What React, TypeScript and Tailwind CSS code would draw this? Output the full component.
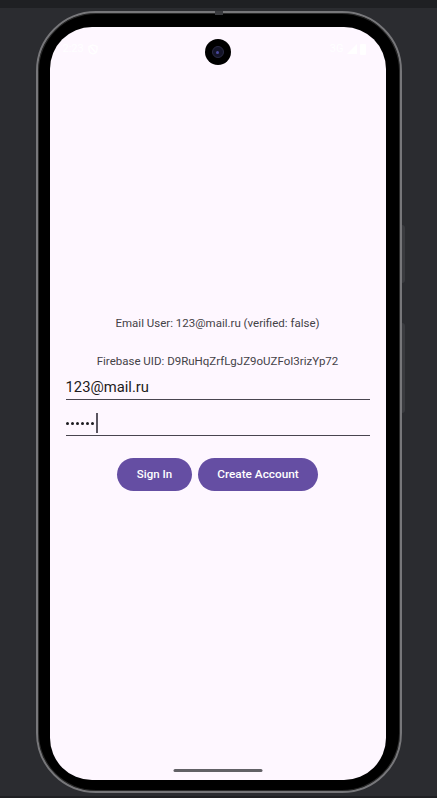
export default function App() {
  return (
    <div className="relative w-[437px] h-[798px] overflow-hidden bg-[#2b2c30] font-['Roboto',sans-serif]">
      {/* top and bottom strips */}
      <div className="h-[8px] bg-[#1f2023]" />

      {/* PHONE */}
      <div className="relative mx-auto mt-[3px] w-[366px] h-[782px] rounded-[60px] bg-black border-[2px] border-[#77777a] shadow-[inset_0_0_0_1px_#2a2a2a] pt-[14px] pl-[12px] pr-[14px] pb-[11px]">
        {/* side keys */}
        <div className="absolute right-[-5px] top-[212px] w-[3px] h-[58px] rounded-r bg-[#3a3b3f]" />
        <div className="absolute right-[-5px] top-[310px] w-[3px] h-[90px] rounded-r bg-[#3a3b3f]" />
        <div className="absolute left-1/2 top-[-2px] -translate-x-1/2 w-[8px] h-[4px] bg-[#3a3b3f]" />

        {/* SCREEN */}
        <div className="relative h-full rounded-[42px] bg-[#fef7ff] flex flex-col items-stretch justify-center px-4">
          {/* status bar */}
          <div className="absolute left-[13px] right-[20px] top-[14px] flex items-center justify-between text-[11px] text-white">
            <div className="flex items-center gap-1">
              <span>2:23</span>
              <svg width="10" height="11" viewBox="0 0 10 11" fill="none" stroke="white" strokeWidth="1.2">
                <path d="M5 1 L9 2.5 V5.5 C9 8 7 9.5 5 10 C3 9.5 1 8 1 5.5 V2.5 Z" />
                <path d="M2 2 L8 9" />
              </svg>
            </div>
            <div className="flex items-center gap-[3px]">
              <span>3G</span>
              <svg width="10" height="10" viewBox="0 0 10 10">
                <path d="M10 0 V10 H0 Z" fill="white" />
              </svg>
              <div className="w-[6px] h-[11px] rounded-[1px] bg-white" />
            </div>
          </div>

          {/* camera */}
          <div className="absolute left-1/2 top-[12px] -translate-x-1/2 w-[26px] h-[26px] rounded-full bg-black flex items-center justify-center">
            <div className="w-[12px] h-[12px] rounded-full bg-[#141428] border border-[#2a2a44] flex items-center justify-center">
              <div className="w-[3px] h-[3px] rounded-full bg-[#4a4aa0]" />
            </div>
          </div>

          {/* CONTENT */}
          <div className="flex flex-col mt-[-2px]">
            <p className="text-center text-[11.5px] leading-[16px] text-[#444247]">
              Email User: 123@mail.ru (verified: false)
            </p>
            <p className="mt-[22px] text-center text-[11.5px] leading-[16px] text-[#444247]">
              Firebase UID: D9RuHqZrfLgJZ9oUZFoI3rizYp72
            </p>

            <div className="mt-[7px] h-[24px] border-b border-[#49454f] flex items-center">
              <span className="text-[14.8px] text-[#1d1b20]">123@mail.ru</span>
            </div>
            <div className="mt-[12px] h-[24px] border-b border-[#49454f] flex items-center">
              <div className="flex gap-[2px]" aria-label="password">
                {[0, 1, 2, 3, 4, 5].map((i) => (
                  <span key={i} className="w-[3px] h-[3px] rounded-full bg-[#1d1b20]" />
                ))}
              </div>
              <span className="ml-[2px] w-[2px] h-[20px] bg-[#5a5560]" />
            </div>

            <div className="mt-[22px] flex justify-center gap-[6px]">
              <button className="h-[33px] w-[75px] pt-[2px] rounded-full bg-[#654ea3] text-white text-[11.5px] font-medium">
                Sign In
              </button>
              <button className="h-[33px] w-[120px] pt-[2px] rounded-full bg-[#654ea3] text-white text-[11.8px] font-medium">
                Create Account
              </button>
            </div>
          </div>

          {/* home indicator */}
          <div className="absolute bottom-[8px] left-1/2 -translate-x-1/2 w-[89px] h-[3px] rounded-full bg-[#626166]" />
        </div>
      </div>

      <div className="absolute bottom-0 left-0 right-0 h-[2px] bg-[#1f2023]" />
    </div>
  );
}
